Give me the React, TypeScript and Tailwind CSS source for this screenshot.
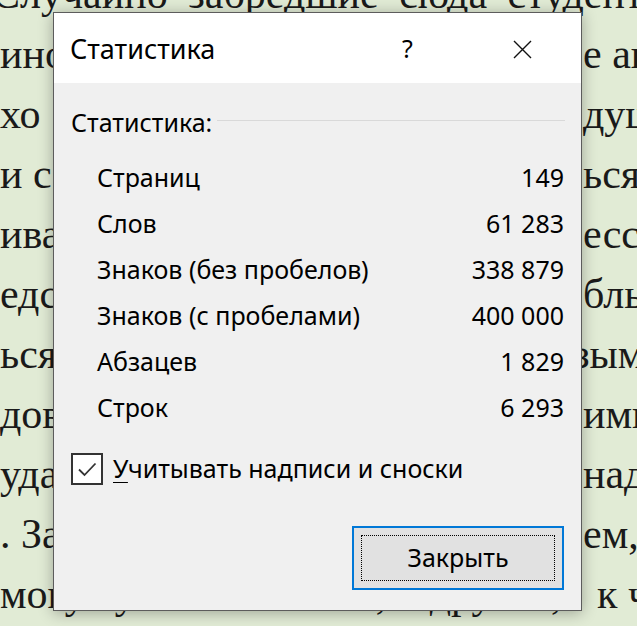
import React from "react";

const serif = { fontFamily: '"Liberation Serif", "Times New Roman", serif' };
const sans = { fontFamily: '"Noto Sans", "Open Sans", sans-serif' };

const lines: [string, string, string][] = [
  ["ино", "е ан", "ml-0"],
  ["хо", "душ", "ml-0"],
  ["и  са", "ься", "ml-0"],
  ["ива", "есс", "ml-0"],
  ["едст", "бль", "ml-0"],
  ["ься", "зым", "-ml-[10px]"],
  ["дов", "ими", "ml-0"],
  ["уда", "над", "ml-0"],
  [". За", "ем,", "ml-0"],
  ["мо", "к ч", "ml-[14px]"],
];

const rows: [string, string][] = [
  ["Страниц", "149"],
  ["Слов", "61 283"],
  ["Знаков (без пробелов)", "338 879"],
  ["Знаков (с пробелами)", "400 000"],
  ["Абзацев", "1 829"],
  ["Строк", "6 293"],
];

export default function App() {
  return (
    <div className="relative w-[637px] h-[626px] overflow-hidden bg-[#e1ebd5]">
      <div
        className="-mt-[36px] text-[42px] leading-[60px] text-[#1a1a1a]"
        style={serif}
      >
        <div className="whitespace-nowrap -ml-[8px] [word-spacing:10px]">
          Случайно забредшие сюда студенты
        </div>
        {lines.map(([l, r, off], i) => (
          <div key={i} className="flex whitespace-nowrap">
            <span className="w-[583px] shrink-0 overflow-hidden">
              {i === 9 ? "могут узнать об этом, и другие," : l}
            </span>
            <span className={off}>{r}</span>
          </div>
        ))}
      </div>

      <div
        className="absolute left-[53px] top-[12px] w-[529px] h-[599px] border border-[#5c5c5c] bg-[#f0f0f0] shadow-[0_2px_14px_rgba(0,0,0,0.3)] flex flex-col text-black"
        style={sans}
      >
        <div className="h-[70px] bg-white flex items-center pl-[16px] pt-[2px] shrink-0">
          <span className="flex-1 text-[27px]">Статистика</span>
          <span className="text-[25px] w-[11px] flex justify-center">?</span>
          <svg
            className="ml-[100px] mr-[49px]"
            width="19"
            height="19"
            viewBox="0 0 19 19"
          >
            <path d="M1 1L18 18M18 1L1 18" stroke="#111" strokeWidth="1.4" />
          </svg>
        </div>

        <div className="flex flex-col pl-[17px] pr-[16px] pt-[25px] text-[25px]">
          <div className="flex items-center h-[30px]">
            <span>Статистика:</span>
            <div className="flex-1 h-px bg-[#d9d9d9] ml-[5px] -mt-[6px]" />
          </div>
          <div className="flex flex-col mt-[17px] pl-[26px] pr-px">
            {rows.map(([k, v]) => (
              <div key={k} className="flex justify-between items-center h-[46px]">
                <span>{k}</span>
                <span>{v}</span>
              </div>
            ))}
          </div>
          <div className="flex items-center mt-[22px] h-[32px]">
            <div className="w-[32px] h-[32px] border-2 border-[#333] bg-white flex items-center justify-center shrink-0">
              <svg width="24" height="24" viewBox="0 0 24 24">
                <path
                  d="M4 12.5L9.5 18L20.5 6.5"
                  fill="none"
                  stroke="#333"
                  strokeWidth="1.8"
                />
              </svg>
            </div>
            <span className="ml-[10px]">
              <span className="underline underline-offset-[4px] decoration-1">У</span>
              читывать надписи и сноски
            </span>
          </div>
          <div className="flex justify-end mt-[41px] pr-px">
            <div className="w-[212px] h-[64px] border-2 border-[#0078d7] bg-[#e1e1e1] p-[7px]">
              <div className="w-full h-full border border-dotted border-black flex items-center justify-center">
                Закрыть
              </div>
            </div>
          </div>
        </div>
      </div>
    </div>
  );
}
